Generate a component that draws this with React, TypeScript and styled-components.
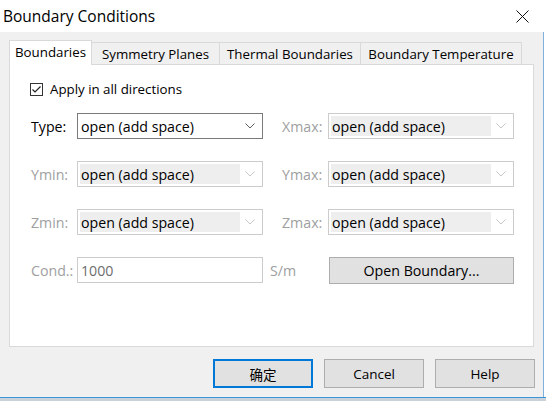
import React from "react";
import styled, { createGlobalStyle } from "styled-components";

const GlobalStyle = createGlobalStyle`
  html, body { margin: 0; padding: 0; }
  body {
    width: 546px;
    height: 401px;
    overflow: hidden;
    background: #c9d1d9;
    font-family: "Open Sans", "Noto Sans CJK SC", sans-serif;
    color: #000;
  }
`;

const Window = styled.div`
  width: 546px;
  height: 398px;
  display: flex;
  flex-direction: column;
  border-bottom: 1px solid #3d95d8;
  box-sizing: border-box;
  background: #fff;
`;

const TitleBar = styled.div`
  height: 32px;
  flex: 0 0 32px;
  display: flex;
  align-items: center;
  justify-content: space-between;
  background: #fff;
  padding-left: 3px;
`;

const Title = styled.div`
  font-size: 15.5px;
  margin-top: -1px;
`;

const CloseBox = styled.div`
  width: 46px;
  height: 32px;
  display: flex;
  align-items: center;
  justify-content: center;
  margin-right: 1px;
`;

const Body = styled.div`
  flex: 1;
  background: #f0f0f0;
  border-right: 1px solid #7fb0dc;
  margin-right: 2px;
  padding: 8px 0 0 9px;
  display: flex;
  flex-direction: column;
`;

const TabRow = styled.div`
  display: flex;
  align-items: flex-end;
  height: 24px;
`;

const Tab = styled.div<{ $active?: boolean; $w: number }>`
  box-sizing: border-box;
  width: ${(p) => p.$w}px;
  height: ${(p) => (p.$active ? 25 : 22)}px;
  margin-bottom: ${(p) => (p.$active ? -1 : 0)}px;
  position: relative;
  z-index: ${(p) => (p.$active ? 1 : 0)};
  background: ${(p) => (p.$active ? "#fff" : "#f0f0f0")};
  border: 1px solid #d9d9d9;
  border-bottom: none;
  border-left-width: ${(p) => (p.$active ? 1 : 0)}px;
  font-size: 13.3px;
  display: flex;
  align-items: center;
  justify-content: center;
  white-space: nowrap;
  padding-bottom: ${(p) => (p.$active ? 2 : 0)}px;
`;

const Panel = styled.div`
  box-sizing: border-box;
  width: 525px;
  height: 283px;
  background: #fff;
  border: 1px solid #d9d9d9;
  padding: 17px 0 0 21px;
`;

const CheckRow = styled.label`
  display: flex;
  align-items: center;
  height: 14px;
  gap: 7px;
  font-size: 13.3px;
  margin-left: -1px;
`;

const CheckBox = styled.span`
  box-sizing: border-box;
  width: 13px;
  height: 13px;
  border: 1px solid #333;
  background: #fff;
  display: flex;
  align-items: center;
  justify-content: center;
`;

const Grid = styled.div`
  margin-top: 17px;
  display: grid;
  grid-template-columns: 46px 186px 65px 186px;
  grid-template-rows: 26px 26px 26px 26px;
  row-gap: 22px;
  align-items: center;
`;

const Label = styled.div<{ $disabled?: boolean; $indent?: number }>`
  font-size: 14.2px;
  color: ${(p) => (p.$disabled ? "#a0a0a0" : "#000")};
  padding-left: ${(p) => p.$indent ?? 0}px;
`;

const SelectBox = styled.div<{ $disabled?: boolean }>`
  box-sizing: border-box;
  height: 26px;
  border: 1px solid ${(p) => (p.$disabled ? "#cccccc" : "#7a7a7a")};
  background: #fff;
  display: flex;
  align-items: stretch;
  padding: 2px;
`;

const SelectText = styled.div<{ $disabled?: boolean }>`
  flex: 0 0 159px;
  background: ${(p) => (p.$disabled ? "#eeeeee" : "transparent")};
  font-size: 14.2px;
  display: flex;
  align-items: center;
  padding-left: 1px;
  white-space: nowrap;
`;

const Arrow = styled.div`
  flex: 1;
  display: flex;
  align-items: center;
  justify-content: center;
`;

const TextInput = styled.div`
  box-sizing: border-box;
  height: 26px;
  border: 1px solid #cccccc;
  background: #fff;
  display: flex;
  align-items: center;
  padding-left: 3px;
  font-size: 14.2px;
  color: #6d6d6d;
`;

const PanelButton = styled.div`
  box-sizing: border-box;
  height: 27px;
  border: 1px solid #adadad;
  background: #e1e1e1;
  display: flex;
  align-items: center;
  justify-content: center;
  font-size: 14.2px;
  margin-left: 1px;
`;

const Footer = styled.div`
  display: flex;
  justify-content: flex-end;
  gap: 11px;
  padding-top: 12px;
  padding-right: 8px;
`;

const Button = styled.div<{ $primary?: boolean }>`
  box-sizing: border-box;
  width: 100px;
  height: 29px;
  border: ${(p) => (p.$primary ? "2px solid #0078d7" : "1px solid #adadad")};
  background: #e1e1e1;
  display: flex;
  align-items: center;
  justify-content: center;
  font-size: 13.5px;
`;

const Chevron: React.FC<{ color: string }> = ({ color }) => (
  <svg width="10" height="6" viewBox="0 0 10 6">
    <polyline points="0.5,0.5 5,5 9.5,0.5" fill="none" stroke={color} strokeWidth="1" />
  </svg>
);

const Select: React.FC<{ disabled?: boolean }> = ({ disabled }) => (
  <SelectBox $disabled={disabled}>
    <SelectText $disabled={disabled}>open (add space)</SelectText>
    <Arrow>
      <Chevron color={disabled ? "#c6c6c6" : "#606060"} />
    </Arrow>
  </SelectBox>
);

export default function App() {
  return (
    <>
      <GlobalStyle />
      <Window>
        <TitleBar>
          <Title>Boundary Conditions</Title>
          <CloseBox>
            <svg width="13" height="13" viewBox="0 0 13 13">
              <path d="M0.5 0.5 L12.5 12.5 M12.5 0.5 L0.5 12.5" stroke="#111" strokeWidth="1" fill="none" />
            </svg>
          </CloseBox>
        </TitleBar>
        <Body>
          <TabRow>
            <Tab $active $w={83}>Boundaries</Tab>
            <Tab $w={128}>Symmetry Planes</Tab>
            <Tab $w={141}>Thermal Boundaries</Tab>
            <Tab $w={161}>Boundary Temperature</Tab>
          </TabRow>
          <Panel>
            <CheckRow>
              <CheckBox>
                <svg width="11" height="11" viewBox="0 0 11 11">
                  <polyline points="1.5,5.5 4,8 9.5,2.5" fill="none" stroke="#222" strokeWidth="1.2" />
                </svg>
              </CheckBox>
              Apply in all directions
            </CheckRow>
            <Grid>
              <Label>Type:</Label>
              <Select />
              <Label $disabled $indent={19}>Xmax:</Label>
              <Select disabled />

              <Label $disabled>Ymin:</Label>
              <Select disabled />
              <Label $disabled $indent={19}>Ymax:</Label>
              <Select disabled />

              <Label $disabled>Zmin:</Label>
              <Select disabled />
              <Label $disabled $indent={19}>Zmax:</Label>
              <Select disabled />

              <Label $disabled>Cond.:</Label>
              <TextInput>1000</TextInput>
              <Label $disabled $indent={7}>S/m</Label>
              <PanelButton>Open Boundary...</PanelButton>
            </Grid>
          </Panel>
          <Footer>
            <Button $primary>确定</Button>
            <Button>Cancel</Button>
            <Button>Help</Button>
          </Footer>
        </Body>
      </Window>
    </>
  );
}
